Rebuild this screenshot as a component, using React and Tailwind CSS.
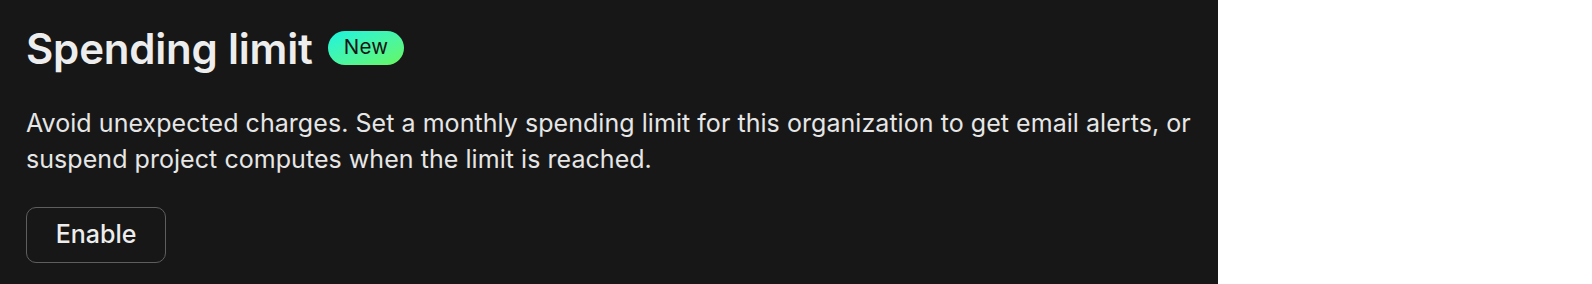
import React from 'react';

export default function App() {
  return (
    <div className="flex w-full bg-white" style={{ fontFamily: 'Inter, "Noto Sans", sans-serif' }}>
      <section className="w-[1218px] h-[284px] shrink-0 bg-[#171717] px-[26px] pt-[25px]">
        {/* Titre + badge */}
        <div className="flex items-center gap-[15px]">
          <h2 className="text-[42px] leading-[48px] font-semibold tracking-[-0.2px] text-[#ededed]">Spending limit</h2>
          <span className="-mt-[3px] inline-flex h-[34px] items-center rounded-full bg-linear-to-br from-[#12f3e0] to-[#66f75a] px-[16px] text-[20.5px] font-normal tracking-[0.3px] text-[#141414]">
            New
          </span>
        </div>

        <p className="mt-[32px] whitespace-nowrap text-[25px] leading-[36px] tracking-[0.05px] text-[#e6e6e6]">
          Avoid unexpected charges. Set a monthly spending limit for this organization to get email alerts, or
          <br />
          suspend project computes when the limit is reached.
        </p>

        <button className="mt-[30px] h-[56px] w-[140px] rounded-[10px] border border-[#5e5e5e] text-[25px] font-medium text-[#ededed]">
          Enable
        </button>
      </section>
    </div>
  );
}
